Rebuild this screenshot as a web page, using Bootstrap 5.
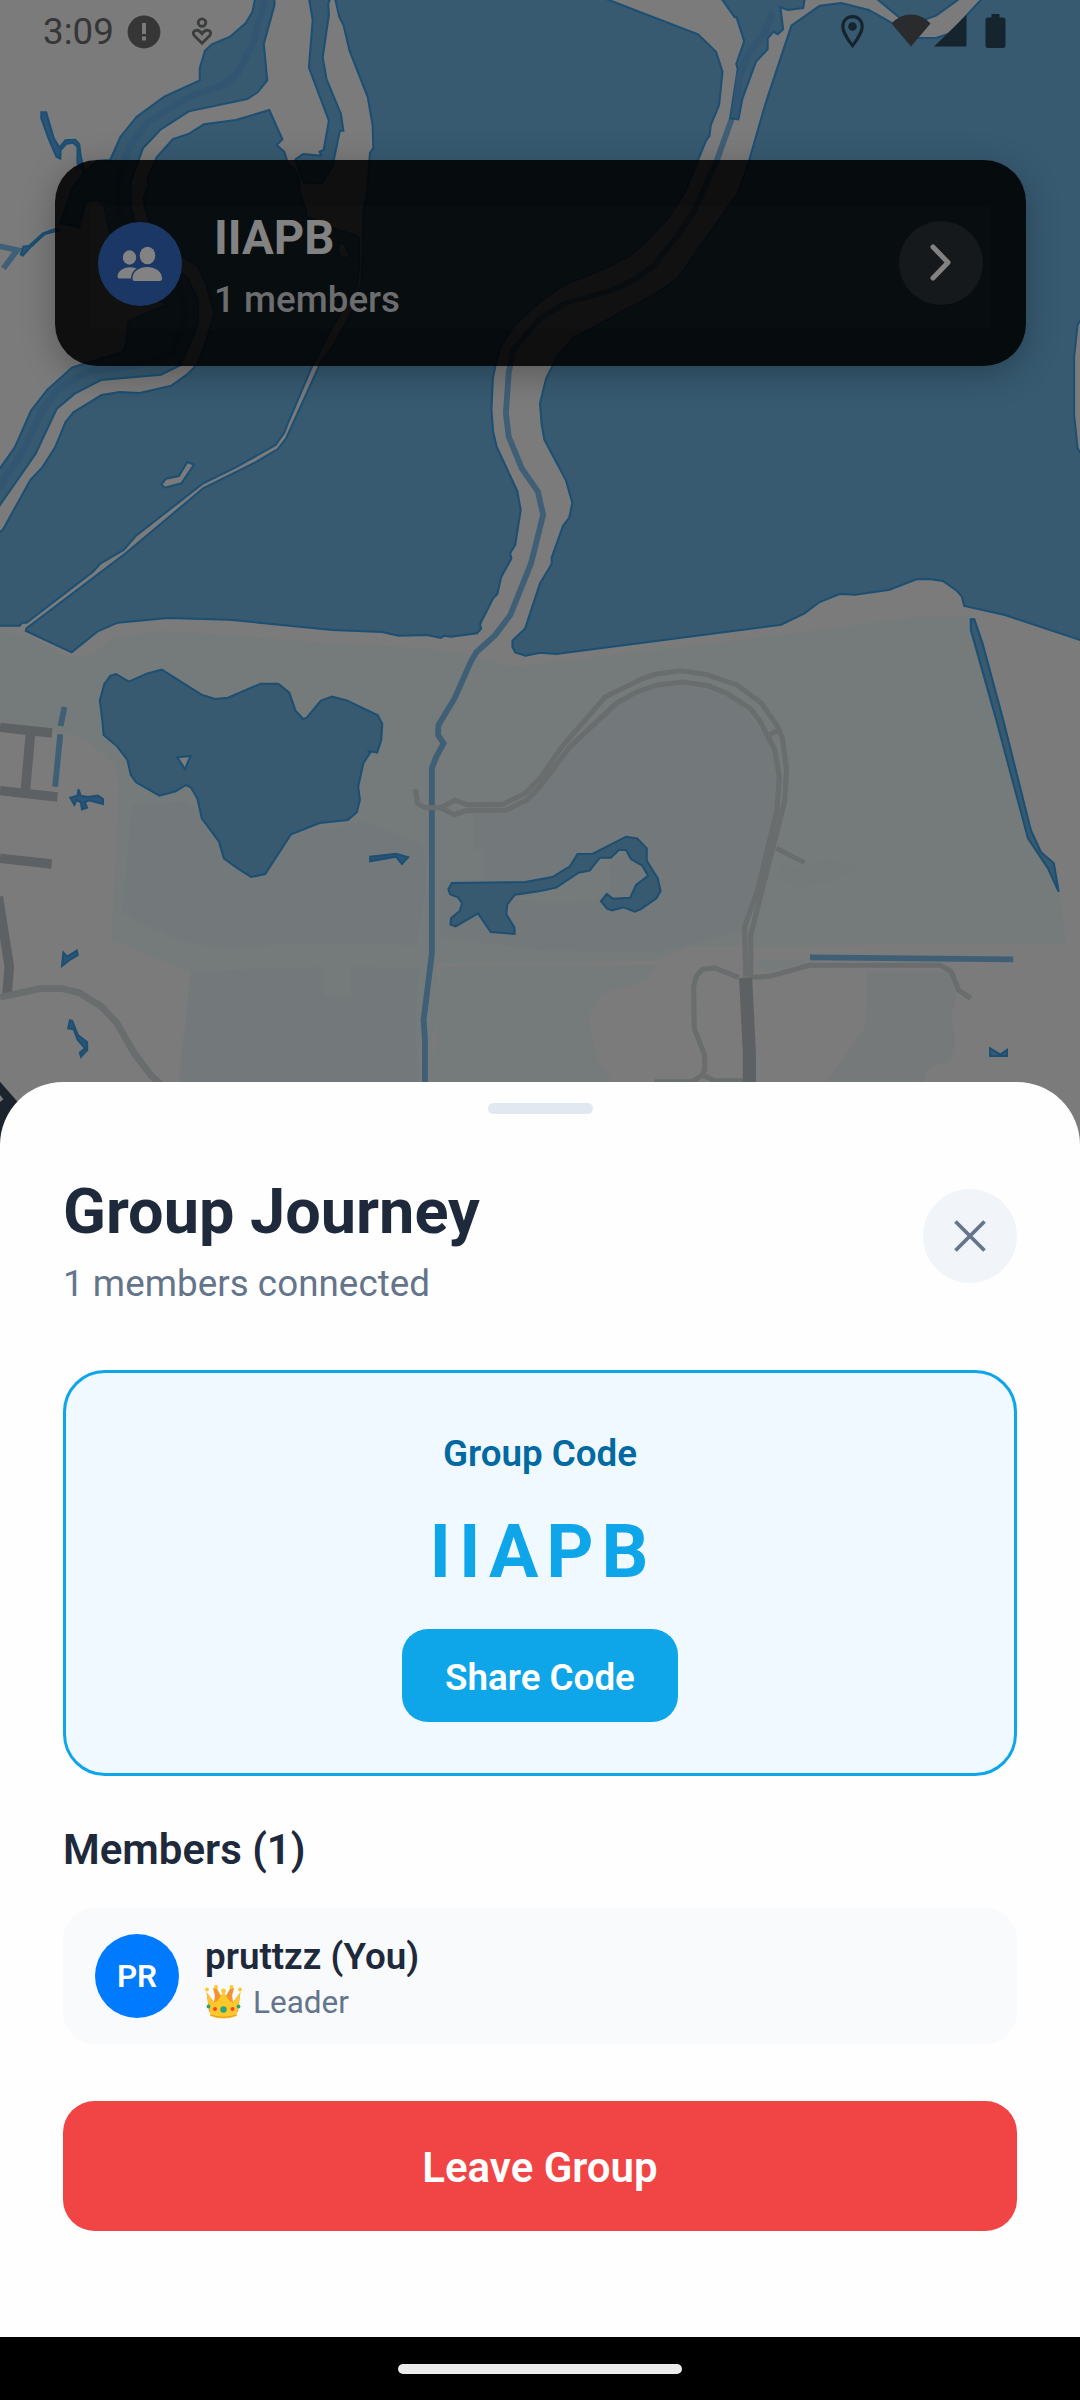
<!DOCTYPE html>
<html lang="en">
<head>
<meta charset="utf-8">
<meta name="viewport" content="width=device-width, initial-scale=1">
<title>Group Journey</title>
<link href="https://cdn.jsdelivr.net/npm/bootstrap@5.3.0/dist/css/bootstrap.min.css" rel="stylesheet">
<style>
body{font-family:Roboto,"Liberation Sans",sans-serif;background:#000;margin:0}
.phone{width:1080px;height:2400px;background:#7b7b7c}
.map-bg{position:absolute;left:0;top:0;width:1080px;height:1200px;display:block}
.status{height:64px;padding-left:43px;padding-right:74px;color:#363636}
.clock{font-size:36.75px;line-height:43px}
.group-pill{margin:96px 54px 0 55px;height:206px;border-radius:42px;background:rgba(0,0,0,.88);box-shadow:0 8px 34px rgba(0,0,0,.27);padding:45.5px 35px 37px}
.pill-inner{height:123.5px;background:rgba(255,255,255,.013);padding:0 8px}
.ico-round{width:84px;height:84px;border-radius:50%;flex:none}
.t-pill{font-size:47.25px;line-height:55px;font-weight:700;color:#828282}
.s-pill{font-size:36.75px;line-height:43px;font-weight:500;color:#6b6d6e}
.sheet{margin-top:716px;height:1255px;background:#fefefe;border-radius:63px 63px 0 0;padding:21px 63px 0}
.grab{width:105px;height:11px;border-radius:6px;background:#e2e8f0}
.head-row{margin-top:61px;height:195px}
.t-head{font-size:63px;line-height:74px;font-weight:700;color:#1e293b;margin:0}
.s-head{font-size:36.75px;line-height:43px;color:#64748b;margin-top:13px;letter-spacing:.05px}
.btn-x{width:94px;height:94px;border-radius:50%;background:#f1f5f9;margin-top:14px}
.code-box{height:406px;border:3px solid #0ea5e9;border-radius:42px;background:#f0f9ff;padding-top:59px}
.code-label{font-size:36.75px;line-height:43px;font-weight:600;color:#0369a1}
.code-val{font-size:73.5px;line-height:86px;font-weight:700;color:#0ea5e9;letter-spacing:7.9px;margin-top:34px;padding-left:6px}
.btn-share,.btn-share:hover{width:276px;height:93px;margin-top:34px;border-radius:26px;border:0;background:#0ea5e9;color:#fff;font-size:36.75px;font-weight:600;line-height:43px;padding:4px 0 0}
.t-mem{font-size:42px;line-height:49px;font-weight:600;color:#1e293b;margin:49px 0 34px}
.mem-card{height:136px;border-radius:31.5px;background:#f8fafc;padding:0 32px}
.ava{background:#007aff;color:#fff;font-size:31.5px;font-weight:600;padding-top:2px}
.m-name{font-size:36.75px;line-height:43px;font-weight:600;color:#1e293b}
.m-role{font-size:31.5px;line-height:37px;color:#64748b;margin-top:6px}
.btn-leave,.btn-leave:hover{height:130px;margin-top:57px;border-radius:31.5px;border:0;background:#f14444;color:#fff;font-size:42px;font-weight:600;padding:2px 0 0}
.navbar-sys{height:63px;background:#000}
.home-bar{width:284px;height:10px;border-radius:5px;background:#ebebeb}
.w{fill:#375a71;stroke:#1c4f72;stroke-width:6}
.ws{fill:#2b5475;stroke:#1c4f72;stroke-width:6}
.ch{fill:none;stroke:#3f5f76;stroke-width:17}
.rd{fill:none;stroke:#696d6d;stroke-width:15}
.rb{fill:none;stroke:#5d6164;stroke-width:28}
.g{fill:#757b7a}.b{fill:#73787b}.l{fill:#7b7b7c}
.dp{fill:none;stroke:#325672;stroke-width:20}
</style>
</head>
<body>
<div class="phone position-relative d-flex flex-column overflow-hidden">
<svg class="map-bg" viewBox="0 0 3136 3600" preserveAspectRatio="none">
  <rect class="l" width="3136" height="3600"/>
  <!-- parks -->
  <path class="g" d="M0 1895L90 1910 190 1970 270 1965 330 1910 480 1892 900 1925 1240 1945 1390 1970 1480 2000 1568 1992 2268 1905 2648 1852 2830 1852 2918 2160 2988 2450 3028 2560 3073 2650 3095 2830 2000 2838 1898 2882 1268 2890 1275 3020 1255 3110 1260 3260H515L555 2915 325 2820 345 2350 330 2290 250 2220 180 2195 0 2165Z"/>
  <path class="g" d="M1280 2900L1911 2895 1878 2943 1748 2980 1708 3050 1733 3170 1788 3260H1255Z"/>
  <path class="g" d="M2195 2880H2330V2890L2225 2915Z"/>
  <path class="b" d="M385 2412L540 2405 590 2440 850 2500 1050 2465 1200 2520 1238 2560 1235 2660 1210 2835 850 2828 680 2848 530 2825 400 2765 355 2735Z"/>
  <path class="b" d="M555 2915L942 2900V2990H1018V2900L1218 2905 1205 3040 1215 3260H520Z"/>
  <path class="b" d="M1375 2440L1480 2430 1568 2340 1700 2190 1850 2070 1980 2055 2130 2090 2250 2240 2265 2350 2250 2500 2160 2790 2000 2835 1900 2855 1568 2850 1280 2810V2640L1405 2640V2548H1375Z"/>
  <path class="g" d="M1500 2698L1600 2670 1740 2570 1820 2545 1770 2600 1775 2660 1735 2700 1660 2708 1568 2708Z"/>
  <path fill="#74797a" d="M2265 2595L2320 2605 2400 2578 2495 2595 2430 2640 2330 2660 2255 2640Z"/>
  <path fill="#75797a" d="M2518 2915L2513 3080 2388 3260H2678L2690 3210 2758 3180 2773 3130 2763 3040 2778 2995 2755 2915Z"/>
  <!-- roads -->
  <path class="rb" d="M0 2182L151 2199M0 2372L167 2391M0 2575L150 2592M89 2195L73 2380"/>
  <path class="rb" d="M-5 2690L27 2900 20 2988"/>
  <path class="rd" d="M0 2992L115 2966H180L230 2978 295 3020 340 3070 390 3160 440 3228 480 3265" style="stroke-width:20"/>
  <path class="rd" d="M1206 2367L1212 2410 1235 2423H1280L1322 2400 1357 2415 1460 2413 1525 2380 1568 2335 1632 2240 1758 2090 1868 2035 1905 2022 1978 2012 2050 2023 2140 2055 2210 2108 2258 2180 2272 2215 2284 2310 2278 2405 2240 2560 2180 2805V2930"/>
  <path class="rd" d="M1280 2423L1320 2444 1352 2432 1470 2430 1530 2400 1568 2360 1655 2240 1790 2110 1850 2075 1910 2055 1984 2046 2056 2057 2110 2080 2178 2125 2205 2160 2250 2250 2263 2330 2256 2430 2200 2670 2162 2780 2165 2930M2235 2203L2262 2190"/>
  <path class="rd" d="M2255 2545L2336 2588M2145 2932L2075 2904 2040 2908 2022 2928 2014 2960 2016 3085 2046 3165V3208L2040 3225 2010 3245H1900M2040 3225L2075 3242H2165M2180 2932L2235 2929 2350 2896H2730L2762 2915 2783 2970 2819 2995"/>
  <path class="rb" style="stroke-width:38" d="M2165 2933L2176 3160V3265"/>
  <!-- waterways -->
  <path class="ch" d="M2125 356L2082 480 2015 635 1965 710 1900 795 1850 835 1780 870 1640 910 1568 955 1490 1050 1477 1120 1469 1240 1477 1310 1515 1405 1562 1475 1577 1545 1542 1690 1482 1845 1438 1905 1383 1957 1367 1985 1320 2095 1273 2175 1272 2205 1288 2230 1267 2270 1254 2305V2860L1230 3060 1234 3120V3260"/>
  <path class="ch" d="M187 2121L176 2178M175 2203L160 2360M2352 2872L2942 2878M-5 738L50 750 10 805"/>
  <path class="rd" d="M1235 2423H1285"/>
  <!-- lakes and rivers -->
  <path class="w" d="M740 -9V0L733 35 713 70 668 110 615 133 595 152 580 205V241L477 290 397 350 350 410 320 480 285 482 245 515 210 565 175 670 230 682 248 605 285 600 303 620 320 700 350 770 400 880 490 912 373 963 370 980 368 1025 358 1055 295 1075 210 1102 137 1170 90 1232 43 1342 0 1405-9 1420V1528L0 1515 103 1362 165 1226 217 1181 293 1140 467 1124 525 1095 575 970V900L545 835 440 760 400 700 380 620V545L415 445 467 388 548 334 718 297 748 277 776 241 766 132 797 15V-9Z"/>
  <path class="dp" d="M768 0L735 130 690 220 650 255 550 290 430 365 375 440 340 560 345 640 420 740 520 850 540 950 500 1060 400 1095 260 1112 170 1165 120 1235 70 1350 -5 1465"/>
  <path class="w" d="M782 330L685 360 592 373 547 402 502 417 455 472 428 535 432 552 418 590V610L440 690 525 765 575 800 600 855 622 940 600 1020 575 1090 545 1122 498 1157 405 1179 348 1176 295 1185 213 1237 190 1267 160 1342 122 1403 88 1440 8 1590-9 1600V1877H57L65 1868H77L270 1715 290 1692 360 1649 395 1607 590 1450 683 1403 800 1335 826 1297 835 1272 910 1090 960 990 1035 860 1043 800V715L1030 705 980 690 890 650 888 630 870 575 868 535 855 507 838 495 825 455 803 435 820 418Z"/>
  <path class="w" d="M974 -9V0L985 50 998 77 1015 152 1068 292 1082 375 1084 443 1074 460 1068 560 1055 640V720L1050 850 1022 935 967 1040 930 1090 842 1290 831 1315 806 1348 740 1388 590 1465 365 1660 77 1885 75 1893 208 1957 285 1893 342 1868 487 1854 665 1859 965 1890 1110 1896 1157 1907 1240 1905 1280 1914 1290 1907 1310 1910 1385 1900 1397 1886 1394 1872 1433 1793 1444 1783 1455 1732 1485 1675 1481 1660 1496 1635 1512 1530 1502 1473 1442 1340 1432 1295 1427 1230 1431 1135 1440 1090 1455 1040 1490 980 1568 905 1638 855 1758 805 1828 768 1875 725 1940 655 1990 575 2025 485 2050 422 2060 408 2064 375 2088 315 2098 215 2079 155 2027 103 1768 0 1740 -9Z"/>
  <path class="w" d="M898 -9V0L908 60 897 203 955 362 940 450 928 455 933 467 880 462 858 478 882 548 935 550 965 500 987 392H997L990 342 948 237 937 172 955 45 953 12 960 -9Z"/>
  <path fill="#7b7b7c" stroke="#1c4f72" stroke-width="6" d="M985 728L1002 732 1015 765 1005 775 988 773 980 750Z"/>
  <g transform="translate(1568 0)">
    <path class="w" d="M525 -9L530 0 565 52H571L593 124 570 192 574 208 552 355 576 358 588 295 627 185 661 148V115L678 95 690 103 706 88 698 22 720 30 764 24 770 -9Z"/>
    <path class="dp" d="M675 35L655 95 600 170 580 230 565 352"/>
    <path class="w" d="M970 -9L982 0 1055 62 1097 66 1150 47 1225 -9Z"/>
    <path class="w" d="M1288 -9L1280 0 1190 100 1150 114 1097 113 955 30 875 9 812 17 730 77 655 310 605 490 575 580 560 600 400 835 330 885 95 1015 50 1070 18 1135 0 1210 5 1275 13 1320 75 1440 94 1508 85 1553 67 1577 34 1673V1692L0 1750-43 1885-80 1922V1940L-72 1957-42 1967 0 1958 47 1962 700 1874 768 1840 812 1806 870 1782 915 1784 1015 1769 1093 1738 1130 1737 1170 1743 1210 1772 1225 1790 1232 1818 1350 1845 1580 1924V1375L1561 1345 1551 1245V1070L1561 975 1580 940V-9Z"/>
    <path class="w" d="M1251 1858H1261L1285 1930 1345 2160 1425 2490 1455 2557 1492 2590 1506 2675 1475 2605 1417 2515 1325 2160 1251 1890Z"/>
    <path class="w" d="M1307 3145L1337 3164 1356 3150V3168H1307Z"/>
  </g>
  <path fill="#7b7b7c" stroke="#1c4f72" stroke-width="6" d="M544 1386L563 1394 527 1450 478 1463 469 1453 482 1436 519 1428Z"/>
  <path class="w" d="M470 2009L587 2085 625 2097 662 2093 757 2051H808L840 2078 858 2132 880 2157 890 2154 932 2102 964 2090 1007 2101 1097 2146 1110 2172 1107 2220 1095 2258 1068 2252 1075 2258 1055 2290 1040 2360 1045 2400 1036 2437 1010 2460 928 2469 845 2503 770 2622 729 2631 690 2605 650 2575 636 2525 586 2455 573 2395 555 2363 540 2355 510 2374 463 2387 395 2347 380 2325 370 2280 340 2239 301 2205 297 2160 290 2101 303 2052 321 2027 337 2022 374 2045 428 2020Z"/>
  <path fill="#7b7b7c" stroke="#1c4f72" stroke-width="6" d="M515 2272L553 2268 537 2308Z"/>
  <path class="w" d="M1312 2649L1525 2646 1604 2631 1655 2599 1677 2562H1720L1818 2510 1850 2515 1878 2545V2582L1910 2635 1918 2673 1906 2695 1860 2728 1843 2735 1811 2722 1777 2731 1763 2726 1745 2704 1762 2682 1780 2696 1830 2693 1847 2655 1882 2627 1865 2597 1832 2577 1818 2550H1797L1774 2573H1742L1712 2612 1680 2618 1615 2663 1568 2673 1495 2684 1473 2713 1470 2742 1494 2783V2802L1425 2796 1388 2740 1323 2779 1308 2774 1310 2754 1335 2733 1342 2710 1330 2692 1307 2683 1302 2668Z"/>
  <path class="ws" d="M1075 2570L1150 2561 1185 2572 1167 2592 1150 2570 1075 2584ZM204 2393L225 2387 228 2368 234 2387 256 2391 285 2387 299 2397V2412L258 2401 246 2407 253 2423 238 2428 235 2407 222 2400 216 2414ZM180 2898L184 2858 195 2870 223 2852 226 2865 205 2878ZM203 3061L210 3063 226 3105 253 3127V3150L235 3170 232 3158 247 3145 226 3120 214 3088 198 3085ZM120 337H134L156 415 173 443 190 421 218 419 230 432 235 472 245 515 225 490V440L212 428 193 431 176 450 175 476 164 470 142 418 120 355Z"/>
  <path class="ws" d="M175 690L130 702 90 740 66 767 60 763 68 740 85 737 125 700 160 687Z"/>
  <path d="M0 3245L110 3375 0 3600Z" fill="#1b242d"/><path d="M0 3285L10 3298 0 3306Z" fill="#7b7b7c"/>
</svg>

<header class="status position-relative d-flex align-items-start">
  <span class="clock" style="margin-top:10px">3:09</span>
  <svg width="34" height="34" viewBox="0 0 34 34" style="margin:15px 0 0 13px"><circle cx="17" cy="17" r="16.4" fill="#363636"/><path d="M15 8h4v11h-4zM15 21.500h4v4h-4z" fill="#7b7b7c"/></svg>
  <svg width="22" height="29" viewBox="0 0 22 29" style="margin:17px 0 0 30px" fill="none" stroke="#3c3d3d" stroke-width="2.800"><circle cx="11" cy="5.600" r="3.800"/><path d="M11 26.300L3.200 18.600C-.2 14 6.500 10.500 11 16.600 15.500 10.500 22.200 14 18.800 18.600Z"/></svg>
  <svg class="ms-auto" width="166" height="34" viewBox="0 0 166 34" style="margin-top:14px" fill="#16242d"><path d="M12.500 2.600c-6 0-9.700 4.400-9.700 10 0 7 9.700 19 9.700 19s9.700-12 9.700-19c0-5.600-3.700-10-9.700-10Z" fill="none" stroke="#16242d" stroke-width="3.200"/><circle cx="12.500" cy="12.500" r="4.300"/><path d="M51.500 9.500Q60 .5 71 .5t19.500 9L71 32.500Z" fill="#2a2b2d"/><path d="M94 32.500L126.500 1V32.500Z"/><path d="M151.500 0h8v3.500h3.500q2.500 0 2.500 2.500V31.500q0 2.500-2.500 2.500h-15q-2.500 0-2.500-2.500V6q0-2.500 2.500-2.500h3.500Z"/></svg>
</header>

<section class="group-pill position-relative">
  <div class="pill-inner d-flex align-items-start">
    <div class="ico-round d-flex align-items-center justify-content-center" style="background:#1b3765;margin-top:16px">
      <svg width="46" height="36" viewBox="0 0 46 36" fill="#828282"><ellipse cx="12.500" cy="11.500" rx="6.700" ry="7.200"/><ellipse cx="30.500" cy="9.500" rx="7.800" ry="8.700"/><path d="M19.500 22.500C10 18.500.5 24 .5 30.500q0 2 2 2h11.500C14 28 16 25 19.500 22.500ZM15.500 32.500C15.500 17 45 17 45 32.500q0 2.500-2.500 2.500H18q-2.500 0-2.500-2.500Z"/></svg>
    </div>
    <div class="flex-grow-1" style="margin-left:32px;margin-top:5px">
      <div class="t-pill">IIAPB</div>
      <div class="s-pill" style="margin-top:12px">1 members</div>
    </div>
    <div class="ico-round d-flex align-items-center justify-content-center" style="background:#15191b;margin-top:15px">
      <svg width="30" height="42" viewBox="0 0 30 42" fill="none" stroke="#828282" stroke-width="5" stroke-linecap="round" stroke-linejoin="round"><path d="M7 5L22 20.500 7 36"/></svg>
    </div>
  </div>
</section>

<main class="sheet position-relative">
  <div class="grab mx-auto"></div>
  <div class="head-row d-flex justify-content-between align-items-start">
    <div><h1 class="t-head">Group Journey</h1><div class="s-head">1 members connected</div></div>
    <button class="btn btn-x p-0 border-0 d-flex align-items-center justify-content-center" aria-label="Close"><svg width="32" height="32" viewBox="0 0 32 32" stroke="#64748b" stroke-width="3.800"><path d="M1.500 1.500L30.500 30.500M30.500 1.500L1.500 30.500"/></svg></button>
  </div>
  <div class="code-box d-flex flex-column align-items-center">
    <div class="code-label">Group Code</div>
    <div class="code-val">IIAPB</div>
    <button class="btn btn-share">Share Code</button>
  </div>
  <h2 class="t-mem">Members (1)</h2>
  <div class="mem-card d-flex align-items-center">
    <div class="ico-round ava d-flex align-items-center justify-content-center">PR</div>
    <div style="margin-left:26px;padding-top:3px">
      <div class="m-name">pruttzz (You)</div>
      <div class="m-role d-flex align-items-center">
        <svg width="37" height="35" viewBox="0 0 37 35" style="margin-right:11px"><path d="M4 27L1.500 7 9 17 11 3 18.500 17 26 3 28 17 35.500 7 33 27Z" fill="#f39a2d"/><path d="M5.500 31L1.800 8 9.500 18 18.500 7 27.500 18 35.200 8 31.500 31Q18.500 36 5.500 31Z" fill="#fec82a"/><path d="M8 3L11.500 17 16 11 11.500 3ZM29 3L25.500 17 21 11 25.500 3Z" fill="#f29330"/><path d="M5.500 30Q18.500 34.500 31.500 30" fill="none" stroke="#e29b20" stroke-width="1.200"/><g fill="#ffca28"><circle cx="2" cy="4.500" r="1.900"/><circle cx="11" cy="2" r="2"/><circle cx="18.500" cy="6" r="2.400"/><circle cx="26.500" cy="2" r="2"/><circle cx="35" cy="4.500" r="1.900"/></g><g fill="#26a67e"><circle cx="18.500" cy="24.500" r="3.200"/><circle cx="3.500" cy="21.500" r="1.900"/><circle cx="33.500" cy="21.500" r="1.900"/></g><circle cx="10" cy="24" r="2" fill="#f44336"/><circle cx="27.500" cy="24" r="2" fill="#f44336"/></svg>
        <span>Leader</span>
      </div>
    </div>
  </div>
  <button class="btn btn-leave w-100 d-block">Leave Group</button>
</main>
<footer class="navbar-sys d-flex justify-content-center" style="padding-top:27px"><div class="home-bar"></div></footer>
</div>
<script src="https://cdn.jsdelivr.net/npm/bootstrap@5.3.0/dist/js/bootstrap.bundle.min.js"></script>
</body>
</html>
